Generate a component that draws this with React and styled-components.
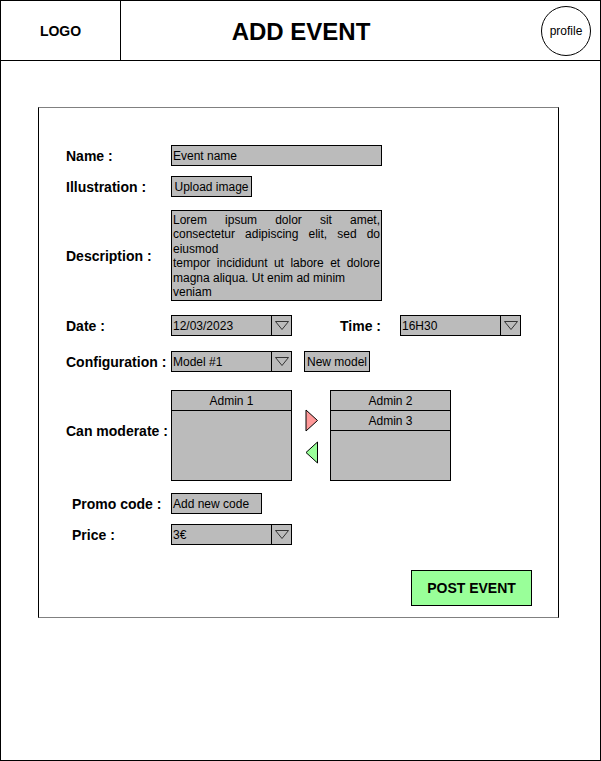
import React from "react";
import styled, { createGlobalStyle } from "styled-components";

const Global = createGlobalStyle`
  html, body { margin: 0; padding: 0; background: #fff; }
  * { box-sizing: border-box; }
  body { font-family: "Liberation Sans", Arial, sans-serif; color: #000; }
`;

const Page = styled.div`
  width: 601px;
  height: 761px;
  border: 1px solid #000;
  display: flex;
  flex-direction: column;
`;

const Header = styled.header`
  height: 60px;
  border-bottom: 1px solid #000;
  display: flex;
  align-items: stretch;
  flex-shrink: 0;
`;

const LogoCell = styled.div`
  width: 120px;
  border-right: 1px solid #000;
  display: flex;
  align-items: center;
  justify-content: center;
  font-weight: bold;
  font-size: 14px;
`;

const TitleCell = styled.h1`
  margin: 0;
  width: 360px;
  display: flex;
  align-items: center;
  justify-content: center;
  font-weight: bold;
  font-size: 24px;
  padding-top: 2px;
`;

const ProfileCell = styled.div`
  flex: 1;
  display: flex;
  align-items: center;
  justify-content: flex-end;
  padding-right: 9px;
`;

const Avatar = styled.div`
  width: 50px;
  height: 50px;
  border: 1px solid #000;
  border-radius: 50%;
  display: flex;
  align-items: center;
  justify-content: center;
  font-size: 12px;
`;

const Main = styled.main`
  padding: 46px 0 0 37px;
`;

const Panel = styled.section`
  width: 521px;
  height: 511px;
  border-left: 1px solid #000;
  border-right: 1px solid #000;
  border-top: 1px solid #808080;
  border-bottom: 1px solid #808080;
  padding: 37px 0 0 27px;
  display: flex;
  flex-direction: column;
`;

const Row = styled.div`
  display: flex;
  align-items: center;
  margin-top: ${(p) => p.$mt || 0}px;
`;

const Label = styled.div`
  width: ${(p) => p.$w || 105}px;
  padding-left: ${(p) => p.$indent || 0}px;
  margin-left: ${(p) => p.$ml || 0}px;
  padding-bottom: ${(p) => p.$lift || 0}px;
  font-weight: bold;
  font-size: 14px;
  white-space: nowrap;
  flex-shrink: 0;
`;

const Field = styled.div`
  width: ${(p) => p.$w}px;
  height: 21px;
  background: #bbbbbb;
  border: 1px solid #000;
  font-size: 12px;
  display: flex;
  align-items: center;
  justify-content: ${(p) => (p.$center ? "center" : "flex-start")};
  padding-left: ${(p) => (p.$center ? 0 : 1)}px;
  margin-left: ${(p) => p.$ml || 0}px;
  white-space: nowrap;
`;

const TextArea = styled.div`
  width: 211px;
  height: 91px;
  background: #bbbbbb;
  border: 1px solid #000;
  font-size: 12px;
  line-height: 14.4px;
  padding: 2px 1px 0 1px;
  text-align: justify;
`;

const Para = styled.p`
  margin: 0;
`;

const Select = styled.div`
  width: 121px;
  height: 21px;
  background: #bbbbbb;
  border: 1px solid #000;
  display: flex;
  font-size: 12px;
  margin-left: ${(p) => p.$ml || 0}px;
`;

const SelectValue = styled.div`
  flex: 1;
  display: flex;
  align-items: center;
  padding-left: 1px;
`;

const SelectArrow = styled.div`
  width: 20px;
  border-left: 1px solid #000;
  display: flex;
  align-items: center;
  justify-content: center;
`;

const ListBox = styled.div`
  width: 121px;
  height: 91px;
  background: #bbbbbb;
  border: 1px solid #000;
`;

const ListItem = styled.div`
  height: 20px;
  border-bottom: 1px solid #000;
  font-size: 12px;
  display: flex;
  align-items: center;
  justify-content: center;
`;

const Arrows = styled.div`
  margin-left: 13px;
  width: 25px;
  display: flex;
  flex-direction: column;
  gap: 9px;
  padding-top: 1px;
`;

const Footer = styled.div`
  display: flex;
  justify-content: flex-end;
  padding-right: 26px;
  margin-top: 25px;
`;

const PostButton = styled.button`
  width: 121px;
  height: 36px;
  background: #99ff99;
  border: 1px solid #000;
  font-family: "Liberation Sans", Arial, sans-serif;
  font-weight: bold;
  font-size: 14px;
  color: #000;
  padding: 0;
  cursor: pointer;
`;

const Caret = () => (
  <svg width="14" height="9" viewBox="0 0 14 9">
    <polygon points="0.5,0.5 13.5,0.5 7,8.5" fill="none" stroke="#333" strokeWidth="1" />
  </svg>
);

const Triangle = ({ dir, fill }) => (
  <svg width="14" height="23" viewBox="0 0 14 23">
    {dir === "right" ? (
      <polygon points="1,1 12.5,11.5 1,22" fill={fill} stroke="#000" strokeWidth="1" />
    ) : (
      <polygon points="12.5,1 1,11.5 12.5,22" fill={fill} stroke="#000" strokeWidth="1" />
    )}
  </svg>
);

const Dropdown = ({ value, ml }) => (
  <Select $ml={ml}>
    <SelectValue>{value}</SelectValue>
    <SelectArrow>
      <Caret />
    </SelectArrow>
  </Select>
);

export default function App() {
  return (
    <>
      <Global />
      <Page>
        <Header>
          <LogoCell>LOGO</LogoCell>
          <TitleCell>ADD EVENT</TitleCell>
          <ProfileCell>
            <Avatar>profile</Avatar>
          </ProfileCell>
        </Header>
        <Main>
          <Panel>
            <Row>
              <Label>Name :</Label>
              <Field $w={211}>Event name</Field>
            </Row>
            <Row $mt={10}>
              <Label>Illustration :</Label>
              <Field $w={81} $center>Upload image</Field>
            </Row>
            <Row $mt={13}>
              <Label>Description :</Label>
              <TextArea>
                <Para>Lorem ipsum dolor sit amet, consectetur adipiscing elit, sed do eiusmod</Para>
                <Para>
                  tempor incididunt ut labore et dolore magna aliqua. Ut enim ad minim
                  <br />
                  veniam
                </Para>
              </TextArea>
            </Row>
            <Row $mt={14}>
              <Label>Date :</Label>
              <Dropdown value="12/03/2023" />
              <Label $w={60} $ml={48}>Time :</Label>
              <Dropdown value="16H30" />
            </Row>
            <Row $mt={15}>
              <Label>Configuration :</Label>
              <Dropdown value="Model #1" />
              <Field $w={66} $ml={12} $center>New model</Field>
            </Row>
            <Row $mt={18}>
              <Label $lift={9}>Can moderate :</Label>
              <ListBox>
                <ListItem>Admin 1</ListItem>
              </ListBox>
              <Arrows>
                <Triangle dir="right" fill="#ff9999" />
                <Triangle dir="left" fill="#99ff99" />
              </Arrows>
              <ListBox>
                <ListItem>Admin 2</ListItem>
                <ListItem>Admin 3</ListItem>
              </ListBox>
            </Row>
            <Row $mt={12}>
              <Label $indent={6}>Promo code :</Label>
              <Field $w={91}>Add new code</Field>
            </Row>
            <Row $mt={10}>
              <Label $indent={6}>Price :</Label>
              <Dropdown value="3€" />
            </Row>
            <Footer>
              <PostButton>POST EVENT</PostButton>
            </Footer>
          </Panel>
        </Main>
      </Page>
    </>
  );
}
